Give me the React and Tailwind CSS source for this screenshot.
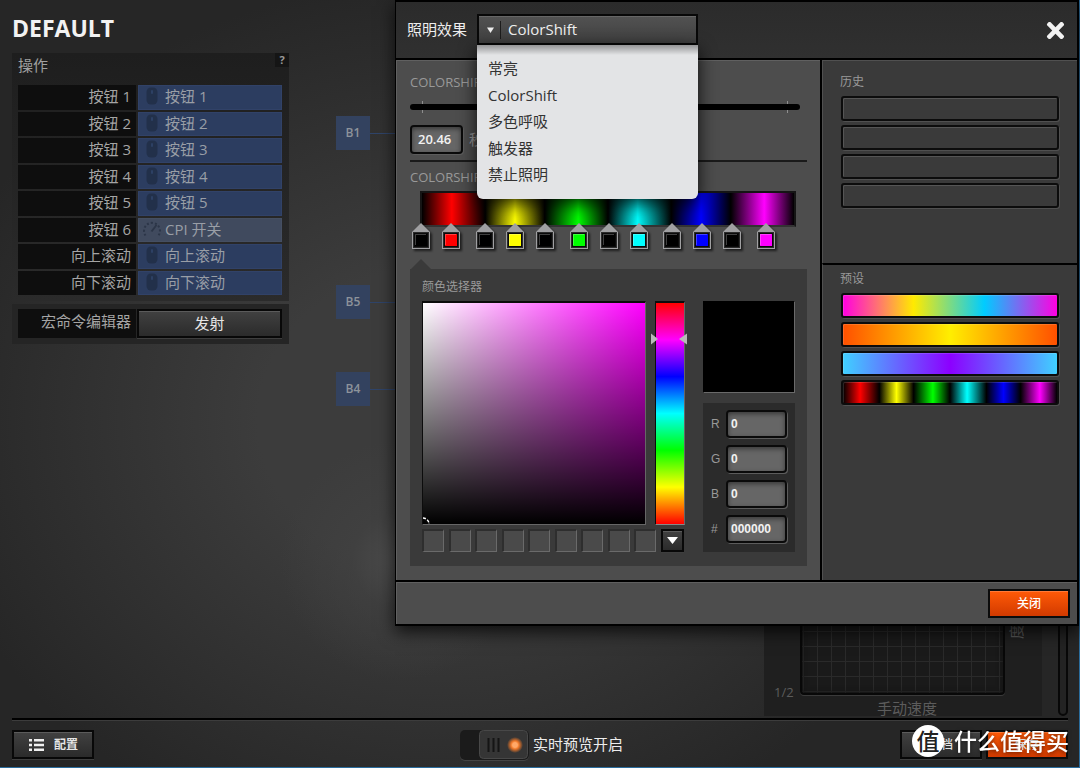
import { FaTimes } from "react-icons/fa";

const actions = [
  { name: "按钮 1", value: "按钮 1" },
  { name: "按钮 2", value: "按钮 2" },
  { name: "按钮 3", value: "按钮 3" },
  { name: "按钮 4", value: "按钮 4" },
  { name: "按钮 5", value: "按钮 5" },
  { name: "按钮 6", value: "CPI 开关", cpi: true },
  { name: "向上滚动", value: "向上滚动" },
  { name: "向下滚动", value: "向下滚动" },
];

const stops = [
  { at: 0, color: "#000000" },
  { at: 8, color: "#ff0000" },
  { at: 17, color: "#000000" },
  { at: 25, color: "#ffff00" },
  { at: 33, color: "#000000" },
  { at: 42, color: "#00ff00" },
  { at: 50, color: "#000000" },
  { at: 58, color: "#00ffff" },
  { at: 67, color: "#000000" },
  { at: 75, color: "#0000ff" },
  { at: 83, color: "#000000" },
  { at: 92, color: "#ff00ff" },
];

const stopGradient =
  "linear-gradient(90deg," +
  stops.map((s) => `${s.color} ${s.at}%`).join(",") +
  ",#000000 100%)";

const presets = [
  "linear-gradient(90deg,#ff00e0,#ffea00 33%,#00ccff 66%,#ff00e0)",
  "linear-gradient(90deg,#ff5000,#ffee00 50%,#ff5000)",
  "linear-gradient(90deg,#40d0ff,#8c00ff 50%,#40d0ff)",
  stopGradient,
];

const effects = ["常亮", "ColorShift", "多色呼吸", "触发器", "禁止照明"];

const barClass =
  "block h-[25px] w-full rounded-[3px] border-2 border-[#0c0c0c] shadow-[1px_1px_0_#505050,inset_1px_1px_0_rgba(255,255,255,0.14)]";
const fieldClass =
  "rounded border-2 border-[#0a0a0a] bg-[#666] font-semibold text-[#f2f2f2] outline-none shadow-[1px_1px_0_#5c5c5c,inset_0_2px_5px_rgba(0,0,0,0.45)]";
const darkButton =
  "border-2 border-[#080808] bg-linear-to-b from-[#414141] to-[#2b2b2b] text-[#e6e6e6] shadow-[0_1px_0_#3e3e3e,inset_0_1px_0_rgba(255,255,255,0.14)]";
const orangeButton =
  "border-2 border-[#0c0c0c] bg-linear-to-b from-[#ff5a08] to-[#d23a00] text-white shadow-[inset_0_1px_0_rgba(255,255,255,0.2)]";

function MouseIcon() {
  return (
    <svg width="12" height="18" viewBox="0 0 12 18" className="mx-[7px] shrink-0" aria-hidden="true">
      <rect x="0.5" y="0.5" width="11" height="17" rx="4.5" fill="#22304a" />
      <rect x="5" y="3" width="2" height="4" rx="1" fill="#2d4064" />
    </svg>
  );
}

function GaugeIcon() {
  return (
    <svg width="20" height="18" viewBox="0 0 20 18" className="mx-[3px] shrink-0" fill="none" stroke="#2c3648" aria-hidden="true">
      <path d="M3.5 15.5A8 8 0 1 1 16.5 15.5" strokeWidth="2" strokeDasharray="2 2" />
      <path d="M9.5 11.5L14.5 5" strokeWidth="2" />
    </svg>
  );
}

function ActionsPanel() {
  return (
    <aside className="w-[277px] shrink-0 pt-3">
      <h1 className="mb-[9px] text-[23px] font-bold leading-8 text-[#f2f2f2]">DEFAULT</h1>
      <section className="bg-linear-to-b from-[#1e1e1e] to-[#2b2b2b] pb-[6px]">
        <div className="flex h-8 items-start justify-between">
          <h2 className="pl-[6px] leading-6 text-[#a0a0a0]">操作</h2>
          <button type="button" aria-label="帮助" className="h-[14px] w-[14px] bg-[#151515] text-[11px] font-bold leading-[14px] text-[#999]">
            ?
          </button>
        </div>
        <ul className="grid h-[210px] grid-rows-8 gap-[2px] pl-[6px] pr-[7px]">
          {actions.map((a) => (
            <li key={a.name} className="flex gap-[2px]">
              <span className="flex w-[118px] items-center justify-end bg-[#0e0e0e] pb-[2px] pr-[5px] leading-5 text-[#a5a5a5]">{a.name}</span>
              <button
                type="button"
                className={
                  a.cpi
                    ? "flex flex-1 items-center border border-[#454f62] bg-[#404a5e] pb-[2px] text-left leading-5 text-[#999ea6]"
                    : "flex flex-1 items-center border border-[#314268] bg-[#2c3d60] pb-[2px] text-left leading-5 text-[#999ea6]"
                }
              >
                {a.cpi ? <GaugeIcon /> : <MouseIcon />}
                {a.value}
              </button>
            </li>
          ))}
        </ul>
      </section>
      <section className="mt-[3px] flex h-10 gap-px bg-[#252525] pb-[6px] pl-[6px] pr-[7px] pt-[5px]">
        <span className="w-[118px] bg-[#0e0e0e] pr-[5px] text-right leading-6 text-[#a5a5a5]">宏命令编辑器</span>
        <button type="button" className={"flex-1 pb-[2px] leading-6 " + darkButton}>发射</button>
      </section>
    </aside>
  );
}

function Node({ label, className }) {
  return (
    <div className={"absolute left-[47px] flex items-center " + className}>
      <button type="button" className="h-[34px] w-[34px] bg-[#33425f] text-xs font-semibold text-[#8d939b]">{label}</button>
      <span className="h-px w-10 bg-[#2f4469]" />
    </div>
  );
}

function SpeedChart() {
  return (
    <section className="flex gap-4 self-end pb-[2px]">
      <div className="flex w-[278px] items-end bg-[#1f1f1f]">
        <span className="mb-[14px] w-9 pl-[10px] text-[13px] leading-5 text-[#5c5c5c]">1/2</span>
        <div className="flex w-[205px] flex-col items-center">
          <div className="h-[170px] w-full rounded border-2 border-[#080808] bg-[#1a1a1a] bg-[linear-gradient(90deg,#2a2a2a_1px,transparent_1px),linear-gradient(0deg,#2a2a2a_1px,transparent_1px)] bg-size-[14px_15px] bg-position-[1px_0px] shadow-[0_1px_0_#3a3a3a,inset_0_0_6px_#111]" />
          <span className="h-[21px] pl-[9px] text-[15px] leading-[27px] text-[#5c5c5c]">手动速度</span>
        </div>
        <span className="mb-[77px] ml-1 h-[15px] w-[15px] -rotate-90 text-[15px] leading-[15px] text-[#5a5a5a]">度</span>
      </div>
      <div className="w-[10px] rounded-full border-2 border-[#080808] bg-[#232323]" />
    </section>
  );
}

function EffectSelect() {
  return (
    <div className="relative w-[221px]">
      <div className="relative flex h-[31px] items-center border-2 border-[#080808] bg-linear-to-b from-[#525252] to-[#404040] shadow-[inset_0_1px_0_rgba(255,255,255,0.12)]">
        <svg width="7" height="6" viewBox="0 0 7 6" className="ml-2 shrink-0" aria-hidden="true">
          <path d="M0 0.5H7L3.5 6Z" fill="#eee" />
        </svg>
        <span className="ml-[6px] h-[18px] w-px shrink-0 bg-[#1c1c1c]" />
        <select id="effect" defaultValue="ColorShift" className="h-full w-full appearance-none bg-transparent pb-px pl-[7px] text-[15px] font-medium text-[#f0f0f0] outline-none">
          {effects.map((e) => (
            <option key={e}>{e}</option>
          ))}
        </select>
      </div>
      <ul className="absolute left-0 top-[31px] z-20 grid h-[154px] w-full grid-rows-5 rounded-b-md bg-[#e3e4e6] bg-[linear-gradient(180deg,rgba(0,0,0,0.35),transparent_10px)] pb-[11px] pl-[11px] pt-[10px] text-[15px] leading-[26px] text-[#333] shadow-[0_5px_18px_rgba(0,0,0,0.85)]">
        {effects.map((e) => (
          <li key={e}>{e}</li>
        ))}
      </ul>
    </div>
  );
}

function StopMarker({ stop }) {
  return (
    <button type="button" aria-label={stop.color} className="absolute top-8 -ml-[9px] drop-shadow-[2px_2px_1px_rgba(0,0,0,0.6)]" style={{ left: `${stop.at}%` }}>
      <svg width="18" height="26" viewBox="0 0 18 26" className="block">
        <path d="M9 0L18 9V26H0V9Z" fill="#a0a0a2" />
        <rect x="1" y="9" width="16" height="16" fill="#2b2b2b" />
        <rect x="2" y="10" width="14" height="14" fill="#0a0a0a" />
        <rect x="3" y="11" width="12" height="12" fill={stop.color} />
        <path d="M3.5 22V11.5H14" fill="none" stroke="#fff" strokeOpacity="0.25" />
      </svg>
    </button>
  );
}

function ColorField({ label, value }) {
  const id = "channel-" + label;
  return (
    <div className="flex items-center">
      <label htmlFor={id} className="w-[15px] font-['Liberation_Sans',sans-serif] text-xs text-[#999]">{label}</label>
      <input id={id} defaultValue={value} className={"h-7 w-[61px] px-[3px] font-['Liberation_Sans',sans-serif] text-xs " + fieldClass} />
    </div>
  );
}

function ColorPicker() {
  return (
    <section className="relative mt-[42px] flex gap-[18px] bg-[#3a3a3a] pb-[14px] pl-3 pr-3 pt-2">
      <svg width="20" height="10" viewBox="0 0 20 10" className="absolute -top-[10px] left-px" aria-hidden="true">
        <path d="M0 10L10 0L20 10Z" fill="#3a3a3a" />
      </svg>
      <div className="w-[263px]">
        <h3 className="mb-1 text-xs leading-5 text-[#999]">颜色选择器</h3>
        <div className="flex justify-between">
          <div className="relative h-[224px] w-[224px] overflow-hidden border border-t-2 border-[#0c0c0c] border-b-[#666] border-r-[#666] bg-[linear-gradient(0deg,#000,transparent),linear-gradient(90deg,#fff,#f0f)]">
            <svg width="8" height="8" viewBox="0 0 8 8" className="absolute bottom-0 left-0" fill="none" aria-hidden="true">
              <path d="M0 2A6 6 0 0 1 6 8" stroke="#fff" strokeWidth="1.5" strokeDasharray="3 1.5" />
            </svg>
          </div>
          <div className="relative h-[224px] w-[30px] border border-t-2 border-[#0c0c0c] border-b-[#888] border-r-[#666] bg-[linear-gradient(180deg,#f00,#f0f_16.7%,#00f_33.3%,#0ff_50%,#0f0_66.7%,#ff0_83.3%,#f00)]">
            <svg width="36" height="12" viewBox="0 0 36 12" className="absolute -left-[5px] top-[30px]" fill="#b9b9b9" aria-hidden="true">
              <path d="M0 0.5L7 6L0 11.5ZM36 0.5L28 6L36 11.5Z" />
            </svg>
          </div>
        </div>
        <div className="mt-1 flex justify-between">
          {Array.from({ length: 9 }, (_, i) => (
            <button key={i} type="button" aria-label={"色板 " + (i + 1)} className="h-[23px] w-[22px] border-2 border-b border-r border-[#2e2e2e] border-b-[#6a6a6a] border-r-[#6a6a6a] bg-[#4a4a4a]" />
          ))}
          <button type="button" aria-label="展开" className={"mr-px flex h-[23px] w-[23px] items-center justify-center " + darkButton}>
            <svg width="11" height="7" viewBox="0 0 11 7" aria-hidden="true">
              <path d="M0 0H11L5.5 7Z" fill="#fff" />
            </svg>
          </button>
        </div>
      </div>
      <div className="flex-1 pt-6">
        <div className="h-[92px] border border-black border-b-[#6a6a6a] border-r-[#6a6a6a] bg-black" />
        <div className="mt-[10px] flex flex-col gap-[7px] bg-[#2b2b2b] px-2 pb-[9px] pt-[7px]">
          <ColorField label="R" value="0" />
          <ColorField label="G" value="0" />
          <ColorField label="B" value="0" />
          <ColorField label="#" value="000000" />
        </div>
      </div>
    </section>
  );
}

function LightingDialog() {
  return (
    <div role="dialog" aria-label="照明效果" className="absolute left-[395px] right-0 top-0 z-10 border-2 border-l border-black bg-[#4d4d4d] shadow-[0_6px_16px_rgba(0,0,0,0.75)]">
      <header className="flex h-14 items-center bg-linear-to-b from-[#2b2b2b] to-[#303030] pb-px pl-[11px] pr-[9px]">
        <label htmlFor="effect" className="mr-[10px] text-[15px] text-[#ededed]">照明效果</label>
        <EffectSelect />
        <button type="button" aria-label="关闭" className="ml-auto pt-[2px] text-[25px] text-[#f2f2f2]">
          <FaTimes />
        </button>
      </header>
      <div className="flex border-y-2 border-black">
        <div className="flex-1 border-l border-t border-[#606060] px-[13px] pb-[14px] pt-[11px]">
          <label htmlFor="speed" className="block text-[13px] leading-5 text-[#999]">COLORSHIFT</label>
          <div className="relative mt-[9px] h-3 w-[390px] max-w-full">
            <span className="absolute left-3 top-0 h-3 w-px bg-[#aaa]/70" />
            <span className="absolute right-3 top-0 h-3 w-px bg-[#aaa]/70" />
            <input
              id="speed"
              type="range"
              defaultValue="40"
              className="absolute left-0 top-[3px] h-[6px] w-full appearance-none rounded-full bg-black [&::-webkit-slider-thumb]:h-4 [&::-webkit-slider-thumb]:w-3 [&::-webkit-slider-thumb]:appearance-none [&::-webkit-slider-thumb]:bg-[#888]"
            />
          </div>
          <div className="mt-3 flex items-center gap-[6px]">
            <input aria-label="秒" defaultValue="20.46" className={"h-[29px] w-[53px] px-[6px] pb-[2px] text-[13px] " + fieldClass} />
            <span className="text-[15px] text-[#999]">秒</span>
          </div>
          <hr className="mt-[6px] border-t-2 border-[#1a1a1a]" />
          <h3 className="mt-[5px] text-[13px] leading-5 text-[#999]">COLORSHIFT</h3>
          <div className="relative ml-[11px] mr-[11px] mt-1 h-9">
            <div className="-ml-px h-9 border-2 border-[#151515] border-b-[#333]" style={{ backgroundImage: stopGradient }} />
            {stops.map((s) => (
              <StopMarker key={s.at} stop={s} />
            ))}
          </div>
          <ColorPicker />
        </div>
        <div className="flex w-[257px] flex-col border-l-2 border-black bg-[#3a3a3a] text-xs leading-5 text-[#999]">
          <section className="h-[203px] border-l border-t border-[#505050] px-[17px] pt-[11px]">
            <h3>历史</h3>
            <div className="mt-1 flex flex-col gap-1 px-px">
              {[1, 2, 3, 4].map((n) => (
                <button key={n} type="button" aria-label={"历史 " + n} className={barClass + " bg-[#3a3a3a]"} />
              ))}
            </div>
          </section>
          <section className="flex-1 border-l border-t-2 border-l-[#505050] border-t-black px-[17px] pt-1">
            <h3>预设</h3>
            <div className="mt-1 flex flex-col gap-1 px-px">
              {presets.map((p) => (
                <button key={p} type="button" aria-label="预设" className={barClass} style={{ backgroundImage: p, backgroundOrigin: "padding-box" }} />
              ))}
            </div>
          </section>
        </div>
      </div>
      <footer className="flex h-[42px] items-center justify-end border-l border-t border-[#606060] pr-[7px]">
        <button type="button" className={"h-[29px] w-[82px] text-xs font-medium " + orangeButton}>关闭</button>
      </footer>
    </div>
  );
}

function Watermark() {
  return (
    <div className="pointer-events-none absolute bottom-[10px] right-[10px] flex items-center gap-[10px] text-white">
      <span className="flex h-8 w-8 items-center justify-center rounded-full bg-white text-[23px] font-medium leading-none text-[#222]">值</span>
      <span className="text-[23px] font-medium leading-8 drop-shadow-[0_1px_2px_rgba(0,0,0,0.6)]">什么值得买</span>
    </div>
  );
}

function BottomBar() {
  return (
    <footer className="relative ml-3 mr-[11px] grid h-[49px] grid-cols-[1fr_auto_1fr] items-center border-t-2 border-black pt-[2px] shadow-[inset_0_1px_0_#3c3c3c]">
      <button type="button" className={"flex h-[29px] w-[82px] items-center gap-[10px] pl-[15px] text-xs font-semibold " + darkButton}>
        <svg width="15" height="12" viewBox="0 0 15 12" fill="#f0f0f0" aria-hidden="true">
          <path d="M0 0H3V2.5H0ZM5 0H15V2.5H5ZM0 4.75H3V7.25H0ZM5 4.75H15V7.25H5ZM0 9.5H3V12H0ZM5 9.5H15V12H5Z" />
        </svg>
        配置
      </button>
      <label className="flex items-center gap-1 pl-[3px] text-[15px] text-[#ededed]">
        <span className="flex h-[30px] w-[69px] justify-end rounded-[5px] bg-[#1b1b1b] shadow-[0_1px_0_#444]">
          <input type="checkbox" defaultChecked className="sr-only" />
          <svg width="50" height="30" viewBox="0 0 50 30" aria-hidden="true">
            <defs>
              <radialGradient id="led">
                <stop offset="0.3" stopColor="#ffa868" />
                <stop offset="0.5" stopColor="#f07828" />
                <stop offset="1" stopColor="#f07828" stopOpacity="0" />
              </radialGradient>
            </defs>
            <rect x="0.5" y="0.5" width="48" height="28" rx="4" fill="#353535" stroke="#484848" />
            <path d="M9.5 8V22M14.5 8V22M19.5 8V22" stroke="#151515" strokeWidth="2" />
            <circle cx="36" cy="15" r="8" fill="url(#led)" />
          </svg>
        </span>
        实时预览开启
      </label>
      <div className="flex justify-end gap-1">
        <button type="button" className={"h-[29px] w-[82px] text-xs font-medium " + darkButton}>存档</button>
        <button type="button" className={"h-[29px] w-[82px] text-xs font-medium " + orangeButton}>保存</button>
      </div>
    </footer>
  );
}

export default function App() {
  return (
    <div className="relative flex min-h-screen flex-col border-b border-r border-[#2a6c9c] bg-[#2a2a2a] bg-[radial-gradient(circle_120px_at_400px_560px,#4c4c4c,#44444480_40%,#3c3c3c00),radial-gradient(ellipse_520px_440px_at_440px_420px,#3c3c3c_35%,#262626)] font-['Open_Sans','Noto_Sans_CJK_SC',sans-serif] text-[15px]">
      <main className="relative flex flex-1 pl-3 pr-[11px]">
        <ActionsPanel />
        <div className="relative min-w-0 flex-1">
          <Node label="B1" className="top-[116px]" />
          <Node label="B5" className="top-[285px]" />
          <Node label="B4" className="top-[372px]" />
        </div>
        <SpeedChart />
        <LightingDialog />
      </main>
      <BottomBar />
      <Watermark />
    </div>
  );
}
